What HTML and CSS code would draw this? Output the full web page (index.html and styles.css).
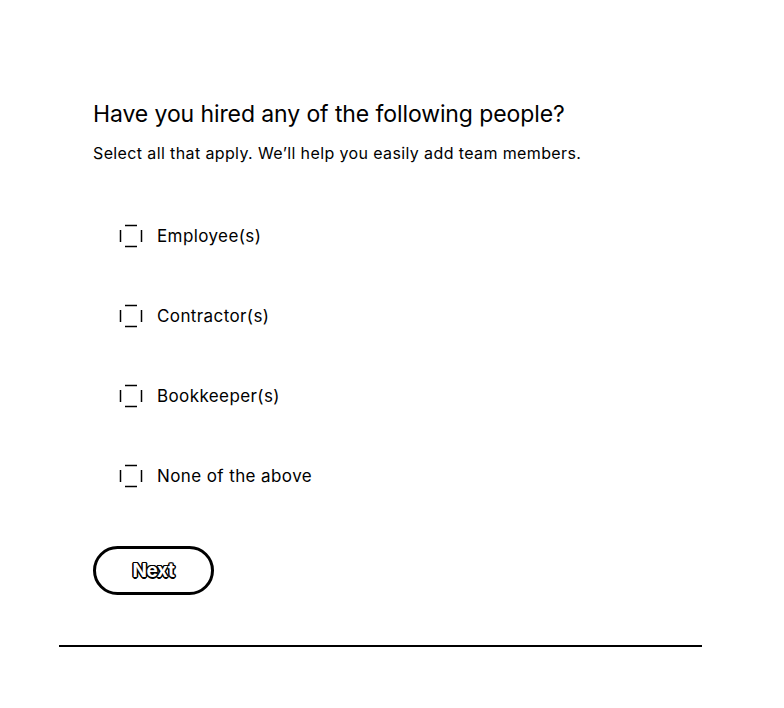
FILE: index.html
```html
<!DOCTYPE html>
<html>
<head>
<meta charset="utf-8">
<link rel="stylesheet" href="styles.css">
</head>
<body>
<div class="page">
  <div class="content">
    <h1 class="title">Have you hired any of the following people?</h1>
    <p class="subtitle">Select all that apply. We’ll help you easily add team members.</p>
    <ul class="options">
      <li class="option"><svg class="box" width="24" height="24" viewBox="0 0 24 24"><path d="M6 1.5H18M1.5 6V18M22.5 6V18M6 22.5H18" stroke="#000" stroke-width="1.5" fill="none"/></svg><span class="label">Employee(s)</span></li>
      <li class="option"><svg class="box" width="24" height="24" viewBox="0 0 24 24"><path d="M6 1.5H18M1.5 6V18M22.5 6V18M6 22.5H18" stroke="#000" stroke-width="1.5" fill="none"/></svg><span class="label">Contractor(s)</span></li>
      <li class="option"><svg class="box" width="24" height="24" viewBox="0 0 24 24"><path d="M6 1.5H18M1.5 6V18M22.5 6V18M6 22.5H18" stroke="#000" stroke-width="1.5" fill="none"/></svg><span class="label">Bookkeeper(s)</span></li>
      <li class="option"><svg class="box" width="24" height="24" viewBox="0 0 24 24"><path d="M6 1.5H18M1.5 6V18M22.5 6V18M6 22.5H18" stroke="#000" stroke-width="1.5" fill="none"/></svg><span class="label">None of the above</span></li>
    </ul>
    <button class="next">Next</button>
  </div>
  <hr class="rule">
</div>
</body>
</html>
```
FILE: styles.css
```css
html, body { margin: 0; padding: 0; background: #fff; }
body { font-family: Inter, "Liberation Sans", sans-serif; color: #000; }
.page { padding: 0 82px 0 59px; }
.content { padding: 100px 0 0 34px; }
.title { margin: 0; font-size: 23px; font-weight: 400; line-height: 28px; letter-spacing: -0.1px; }
.subtitle { margin: 14px 0 0; font-size: 16px; line-height: 22px; letter-spacing: 0.38px; }
.options { list-style: none; margin: 60px 0 0; padding: 0 0 0 26px; display: flex; flex-direction: column; gap: 56px; }
.option { display: flex; align-items: center; gap: 14px; height: 24px; }
.box { flex: none; }
.label { font-size: 17px; letter-spacing: 0.4px; }
.next { margin-top: 58px; width: 121px; height: 49px; border: 3px solid #000; border-radius: 25px; background: #fff; font-family: inherit; font-size: 19px; font-weight: 700; color: #fff; letter-spacing: -0.4px; text-shadow: 1.5px 0 0 #000, -1.5px 0 0 #000, 0 1.5px 0 #000, 0 -1.5px 0 #000, 1px 1px 0 #000, -1px -1px 0 #000, 1px -1px 0 #000, -1px 1px 0 #000; }
.rule { margin: 50px 0 0; border: 0; border-top: 2px solid #000; }
```
